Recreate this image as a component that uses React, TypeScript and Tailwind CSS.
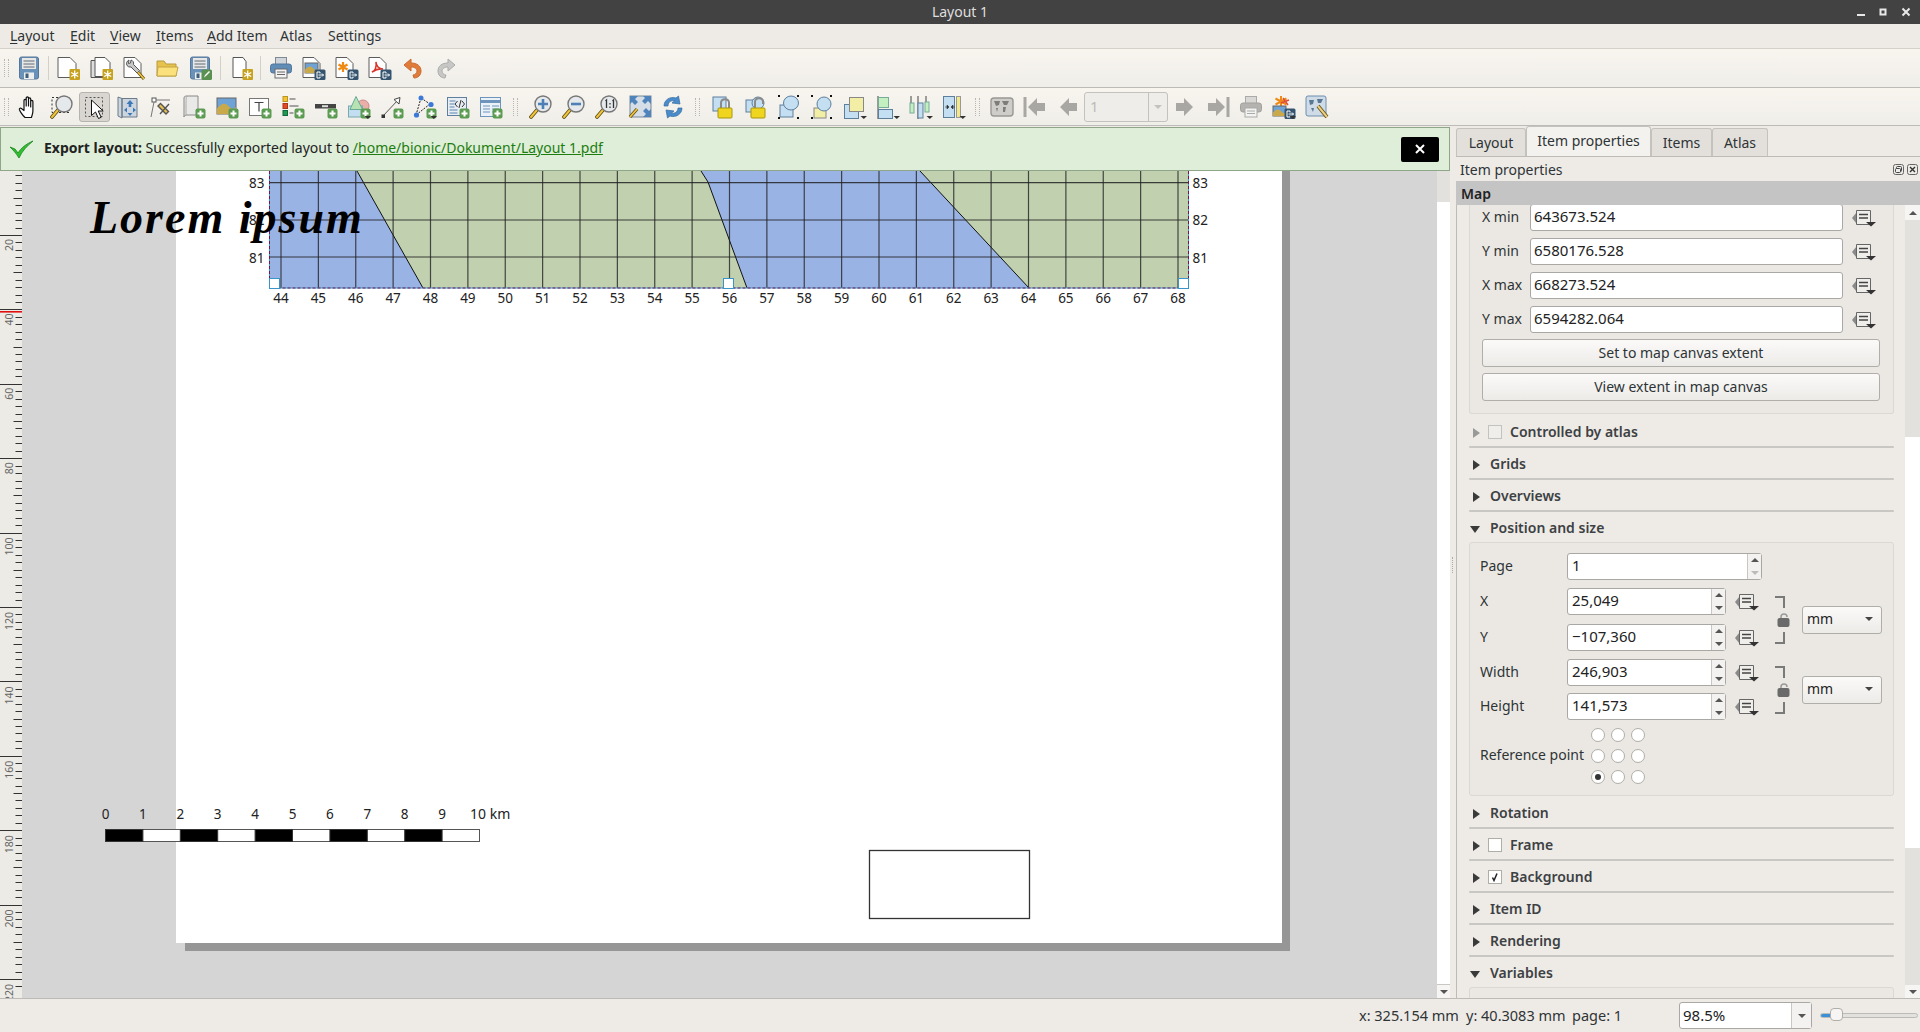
import * as React from "react"

type P = { children: React.ReactNode; w?: number; h?: number }

const Svg = ({ children, w = 24, h = 24 }: P) => (
  <svg width={w} height={h} viewBox={`0 0 ${w} ${h}`} className="block shrink-0">
    {children}
  </svg>
)

// small shared bits of the QGIS icons
const Sheet = ({ x = 2, w = 16 }: { x?: number; w?: number }) => (
  <path d={`M${x} 1.5h${w - 6}l6 6v14h-${w}z`} fill="#fff" stroke="#5c5c5c" />
)
const Star = () => (
  <g>
    <rect x="13.5" y="13" width="10.5" height="11" rx="1" fill="#c7a21f" />
    <path d="M18.7 14.5v8M15.2 16.5l7 4M22.2 16.5l-7 4" stroke="#fff" strokeWidth="1.3" />
  </g>
)
const Out = () => (
  <g>
    <rect x="12.5" y="13.5" width="11" height="10.5" rx="1.5" fill="#34546f" />
    <path d="M15 16v6M15 16h3v1.5M15 22h3v-1.5M16.5 19h5M20 17.5l1.5 1.5-1.5 1.5" stroke="#fff" strokeWidth="1" fill="none" />
  </g>
)
const Plus = () => (
  <g>
    <rect x="13.5" y="13.5" width="10" height="10" rx="2" fill="#5c9c52" />
    <path d="M18.5 15.5v6M15.5 18.5h6" stroke="#fff" strokeWidth="2" />
  </g>
)
const Drop = () => <path d="M17.5 21h6.5l-3.2 3z" fill="#333" />
const Floppy = () => (
  <g>
    <rect x="2.5" y="1" width="19" height="22" rx="2" fill="#6a92b8" stroke="#55779a" />
    <rect x="5" y="2" width="14" height="11" fill="#e7e7e5" />
    <path d="M6.5 5h11M6.5 8h11M6.5 11h11" stroke="#5f6b76" />
    <rect x="7" y="16.5" width="10" height="6.5" fill="#eee" />
    <rect x="8.5" y="17.5" width="3" height="4.5" fill="#3f5d7c" />
  </g>
)
const Lens = ({ children }: { children?: React.ReactNode }) => (
  <g>
    <path d="M8 15l-6 7" stroke="#5b4a12" strokeWidth="3.6" strokeLinecap="round" />
    <path d="M8 15l-6 7" stroke="#f0c53b" strokeWidth="2" strokeLinecap="round" />
    <circle cx="14" cy="9" r="8" fill="#e6e9ec" stroke="#777" strokeWidth="1.4" />
    {children}
  </g>
)
const Pic = ({ x = 2, y = 7, w = 18, h = 13 }: { x?: number; y?: number; w?: number; h?: number }) => (
  <g>
    <rect x={x} y={y} width={w} height={h} fill="#6fa3d6" stroke="#666" />
    <path d={`M${x} ${y + h * 0.65}q${w * 0.35} -${h * 0.5} ${w * 0.6} -${h * 0.15}t${w * 0.4} ${h * 0.05}V${y + h}H${x}z`} fill="#c9a94a" />
  </g>
)

const icons: Record<string, React.ReactNode> = {
  save: <Floppy />,
  newLayout: (<><Sheet x={2} w={18} /><Star /></>),
  dupLayout: (<><path d="M2 4.5h13v17H2z" fill="#ddd" stroke="#555" /><path d="M6 1.5h10l5 5v14H6z" fill="#fff" stroke="#555" /><Star /></>),
  manager: (
    <>
      <Sheet x={2} w={17} />
      <path d="M7 4a4 4 0 0 0-2 5.500 4 4 0 0 0 4 1.500l6 6 2.500-2.500-6-6c.5-2-.5-4-2.500-4.500l-.5 3-2 .5z" fill="#c9c9c9" stroke="#555" />
      <path d="M16 16l6 7" stroke="#5b4a12" strokeWidth="3" />
      <path d="M16 16l6 7" stroke="#edc43f" strokeWidth="1.7" />
    </>
  ),
  open: (<><path d="M2 20V5h7l2 3h10v12z" fill="#e7c24e" stroke="#b79a3f" /><path d="M2 20l1-9h20l-2 9z" fill="#fbe17b" stroke="#c3a544" /></>),
  saveAs: (<><Floppy /><rect x="13.5" y="13.5" width="10.5" height="10.5" rx="1.5" fill="#5b9150" /><path d="M16 21.5l1-2.5 4-4 1 1-4 4z" fill="#fff" /></>),
  addPage: (<><path d="M4 1.5h10l3 4v16H4z" fill="#fff" stroke="#555" /><Star /></>),
  print: (
    <>
      <rect x="6.5" y="1.5" width="11" height="7" fill="#cfd5da" stroke="#7f8a94" />
      <rect x="1.5" y="8" width="21" height="9" rx="2.5" fill="#5f8db8" stroke="#52779b" />
      <rect x="6" y="13" width="12" height="9" fill="#f3f3f3" stroke="#6b6b6b" />
      <path d="M8 16h8M8 18.5h8" stroke="#666" />
    </>
  ),
  expImg: (<><Sheet x={1} w={17} /><Pic x={3} y={7} w={13} h={10} /><Out /></>),
  expSvg: (<><Sheet x={1} w={17} /><path d="M8 6v10M3.5 8.5l9 5M12.5 8.5l-9 5" stroke="#f08a12" strokeWidth="2.2" /><Out /></>),
  expPdf: (<><Sheet x={1} w={17} /><path d="M4 16c3-1 5-5 4-10 0 4 3 7 7 7-4-.5-8 1-11 3z" fill="none" stroke="#d8352a" strokeWidth="1.6" /><Out /></>),
  undo: (<path d="M3 9l7-6v4c6 0 10 3 10 8 0 4-3 7-7 7l-1-3c2 0 4-2 4-4s-2-4-6-4v4z" fill="#e07b3a" stroke="#c96a2d" />),
  redo: (<path d="M21 9l-7-6v4C8 7 4 10 4 15c0 4 3 7 7 7l1-3c-2 0-4-2-4-4s2-4 6-4v4z" fill="#c7c7c5" stroke="#ababa9" />),

  hand: (<path d="M8 22.5c-2-2-5-6-5.6-8-.3-1.2 1.3-1.9 2-1L7 15.5V5.5c0-1.4 2.2-1.4 2.2 0V11 3c0-1.4 2.300-1.4 2.300 0v8-7c0-1.4 2.200-1.4 2.200 0v8-5.500c0-1.400 2.200-1.400 2.200 0V16c0 3-1 4.500-1.500 6.500z" fill="#fff" stroke="#111" strokeWidth="1.2" strokeLinejoin="round" />),
  zoomSel: (
    <>
      <rect x="2" y="2.5" width="17" height="15" fill="none" stroke="#333" strokeDasharray="2 2" />
      <Lens />
    </>
  ),
  select: (
    <>
      <rect x="2.5" y="2.5" width="17" height="19" fill="none" stroke="#555" strokeDasharray="2 2" />
      <path d="M8.5 5v15.500l4-3.500 3 6.500 2.700-1.200-3-6.300h5z" fill="#fff" stroke="#111" />
    </>
  ),
  moveContent: (
    <>
      <path d="M2 2l4 1.500V23L2 21zM6 3.500h15V22H6z" fill="#cdd6de" stroke="#6b7b8a" />
      <path d="M14 5l3.500 4h-2.200v3h-2.600V9h-2.200zM8 15l3-2.500v5zM20 15l-3-2.500v5zM14 21l-2.500-3h5z" fill="#3c79b8" />
    </>
  ),
  nodes: (
    <>
      <rect x="3" y="3" width="4" height="4" fill="#fff" stroke="#555" />
      <path d="M7 5h14M5 7L2 22" stroke="#777" />
      <path d="M9 11l8 8 2.500-2.500-8-8zM20 9l-9 10" stroke="#555" fill="#e7c24e" strokeWidth="1.4" />
    </>
  ),
  addMap: (
    <>
      <path d="M2 3c0-2 2-2 3-2h11v19H5c-2 0-3 1-3 2z" fill="#e9e9e7" stroke="#888" />
      <path d="M5 1c-1 1-1 2-1 19" stroke="#aaa" fill="none" />
      <Plus />
    </>
  ),
  addPic: (<><Pic x={2} y={3} w={19} h={16} /><Plus /></>),
  addLabel: (
    <>
      <rect x="1.5" y="3.500" width="19" height="17" fill="#fff" stroke="#777" />
      <path d="M6.500 7.500h9M11 7.500v9" stroke="#444" strokeWidth="1.2" />
      <Plus />
    </>
  ),
  addLegend: (
    <>
      <rect x="2" y="1.500" width="4.500" height="5" fill="#f5c431" stroke="#b89421" />
      <rect x="2" y="8.500" width="4.500" height="5" fill="#e24a22" stroke="#a8351a" />
      <rect x="2" y="15.500" width="4.500" height="5" fill="#1d9c4f" stroke="#12683a" />
      <path d="M8.500 4h6M8.500 11h9M8.500 18h4" stroke="#888" strokeWidth="1.6" />
      <Plus />
    </>
  ),
  addScale: (
    <>
      <rect x="1" y="9" width="21" height="4.500" fill="#444" />
      <path d="M8 11.200h6" stroke="#ddd" strokeWidth="2" />
      <Plus />
    </>
  ),
  addShape: (
    <>
      <circle cx="16" cy="11" r="6" fill="#eab0a8" stroke="#c88" />
      <rect x="1.500" y="11" width="14" height="11" fill="#c3def0" stroke="#7aa" />
      <path d="M9 1.500l6.500 13H3z" fill="#b7e3b3" stroke="#6a9" />
      <Plus />
      <Drop />
    </>
  ),
  addArrow: (
    <>
      <path d="M3 21L18 5" stroke="#555" />
      <path d="M20 2.500l-1 6.500-5-4.500z" fill="#fff" stroke="#444" />
      <rect x="1.500" y="19.500" width="3.500" height="3.500" fill="#333" />
      <Plus />
    </>
  ),
  addNode: (
    <>
      <path d="M8 3l9 6M8 3L3 20M3 20l14-11" stroke="#222" strokeDasharray="2 1.200" fill="none" />
      <circle cx="8" cy="3" r="2.500" fill="#3b78d8" />
      <circle cx="18" cy="9.500" r="2.600" fill="#3b78d8" />
      <circle cx="3.500" cy="20" r="2.600" fill="#3b78d8" />
      <Plus />
      <Drop />
    </>
  ),
  addHtml: (
    <>
      <rect x="1.500" y="2.500" width="19" height="18" fill="#e8eef4" stroke="#5f7f9f" />
      <path d="M3.500 6h6M3.500 9h5M3.500 12h5M3.500 15h8M3.500 18h8" stroke="#5b85ae" />
      <path d="M11.500 6l-2.500 3 2.500 3M16 6l2.500 3L16 12M15 5l-2 8" stroke="#333" fill="none" />
      <Plus />
    </>
  ),
  addTable: (
    <>
      <rect x="1.500" y="2.500" width="20" height="19" fill="#eaf1f8" stroke="#6d94bb" />
      <path d="M1.500 6.500h20" stroke="#6d94bb" strokeWidth="3" />
      <path d="M4 11h7M13 11h7M4 14h7M13 14h7M4 17h7M13 17h7" stroke="#6d94bb" />
      <Plus />
    </>
  ),
  zoomIn: (<Lens><path d="M14 4v10M9 9h10" stroke="#4d80b5" strokeWidth="2.600" /></Lens>),
  zoomOut: (<Lens><path d="M9 9h10" stroke="#4d80b5" strokeWidth="2.600" /></Lens>),
  zoom1: (<Lens><path d="M10.500 6l1-1v8M15 8v1.500M15 11.500V13M17.500 6l1-1v8" stroke="#333" strokeWidth="1.300" fill="none" /></Lens>),
  zoomFull: (
    <>
      <rect x="2" y="1" width="21" height="21" fill="#d5dee6" stroke="#789" />
      <path d="M2 1h8l-3 3 3 3-3 3-3-3-2 2zM23 1v8l-3-3-3 3-3-3 3-3-2-2zM23 22h-8l3-3-3-3 3-3 3 3 2-2z" fill="#4f83bb" />
      <path d="M9 14l-7 8" stroke="#5b4a12" strokeWidth="3.400" />
      <path d="M9 14l-7 8" stroke="#f0c53b" strokeWidth="1.800" />
    </>
  ),
  refresh: (
    <>
      <path d="M3 11C3 5 9 1 15 3l2.500-2 1.500 8-8-1 2.500-2C9 5 7 8 7 11z" fill="#4a8ccb" stroke="#356a9f" strokeWidth=".7" />
      <path d="M21 13c0 6-6 10-12 8l-2.500 2L5 15l8 1-2.500 2c4 1 6.500-2 6.500-5z" fill="#4a8ccb" stroke="#356a9f" strokeWidth=".7" />
    </>
  ),
  lock: (
    <>
      <rect x="2" y="2" width="13" height="14" fill="#c4dff2" stroke="#5c7f9c" />
      <path d="M10 14V8c0-5 8-5 8 0v6" fill="none" stroke="#8a8a8a" strokeWidth="2" />
      <rect x="7" y="13" width="14" height="10" rx="1" fill="#efd51e" stroke="#a9950f" />
    </>
  ),
  unlock: (
    <>
      <rect x="2" y="5" width="11" height="12" fill="#c4dff2" stroke="#5c7f9c" />
      <circle cx="14" cy="8" r="6" fill="#c4dff2" stroke="#5c7f9c" />
      <path d="M11 13V7c0-5 8-5 8 0v2" fill="none" stroke="#8a8a8a" strokeWidth="2" />
      <rect x="7" y="13" width="14" height="10" rx="1" fill="#efd51e" stroke="#a9950f" />
    </>
  ),
  group: (
    <>
      <rect x="3" y="10" width="13" height="12" fill="#c4dff2" stroke="#5c7f9c" />
      <ellipse cx="14" cy="8" rx="7.500" ry="7" fill="#c4dff2" stroke="#5c7f9c" />
      <path d="M1 0h2v2H1zM20 0h2v2h-2zM1 22h2v2H1zM20 22h2v2h-2z" fill="#111" />
    </>
  ),
  ungroup: (
    <>
      <rect x="4" y="13" width="12" height="10" fill="#f3eea6" stroke="#888" />
      <ellipse cx="14" cy="9" rx="7" ry="7" fill="#c4dff2" stroke="#5c7f9c" />
      <path d="M1 0h2v2H1zM20 0h2v2h-2zM1 22h2v2H1zM20 22h2v2h-2z" fill="#111" />
    </>
  ),
  raise: (
    <>
      <rect x="1.500" y="9.500" width="14" height="14" fill="#c4dff2" stroke="#5c7f9c" />
      <rect x="6.500" y="2.500" width="14" height="14" fill="#f3eea6" stroke="#888" />
      <Drop />
    </>
  ),
  align: (
    <>
      <path d="M2 1v23" stroke="#444" />
      <rect x="2.500" y="2.500" width="10" height="10" fill="#c3efc1" stroke="#7a9" />
      <rect x="2.500" y="14.500" width="14" height="9" fill="#c4dff2" stroke="#5c7f9c" />
      <Drop />
    </>
  ),
  distribute: (
    <>
      <path d="M2 1v11M9 1v23M17 1v12" stroke="#444" />
      <rect x="1" y="8" width="4" height="10" fill="#c3efc1" stroke="#7a9" />
      <rect x="9" y="8" width="5" height="15" fill="#c4dff2" stroke="#5c7f9c" />
      <rect x="16" y="7" width="4" height="10" fill="#c3efc1" stroke="#7a9" />
      <Drop />
    </>
  ),
  resize: (
    <>
      <rect x="1.500" y="1.500" width="11" height="21" fill="#c4dff2" stroke="#5c7f9c" />
      <rect x="14.500" y="1.500" width="4" height="21" fill="#f3e98a" stroke="#999" />
      <path d="M3 12h3M7 12l-2-2v4zM13 12h-3M9 12l2-2v4z" fill="#333" stroke="#333" strokeWidth=".6" />
      <Drop />
    </>
  ),
  atlas: (
    <>
      <rect x="1" y="3" width="22" height="18" rx="3" fill="#cfcdc9" stroke="#9a9894" strokeWidth="1.400" />
      <path d="M4 6h6l-1 4-3 1zM12 6h7l-2 4h-3zM13 12h3l-1 5h-2zM6 13h2l-1 4z" fill="#7f7d79" />
    </>
  ),
  first: (<><path d="M2 2v20" stroke="#a9a7a3" strokeWidth="3" /><path d="M5 12l9-9v5h8v8h-8v5z" fill="#a9a7a3" /></>),
  prev: (<path d="M4 12l9-9v5h8v8h-8v5z" fill="#a9a7a3" />),
  next: (<path d="M20 12l-9-9v5H3v8h8v5z" fill="#a9a7a3" />),
  last: (<><path d="M22 2v20" stroke="#a9a7a3" strokeWidth="3" /><path d="M19 12l-9-9v5H2v8h8v5z" fill="#a9a7a3" /></>),
  printOff: (
    <>
      <rect x="6.500" y="1.500" width="11" height="7" fill="#dad8d4" stroke="#aaa" />
      <rect x="1.500" y="8" width="21" height="9" rx="2.500" fill="#b5b3af" stroke="#a3a19d" />
      <rect x="6" y="13" width="12" height="9" fill="#f3f3f1" stroke="#aaa" />
      <path d="M8 16h8M8 18.500h8" stroke="#aaa" />
    </>
  ),
  expAtlas: (
    <>
      <path d="M9 1v11M3.500 3.500l11 6M14.500 3.500l-11 6" stroke="#f08a12" strokeWidth="2" />
      <path d="M9 8l8-3M11 3l5 7" stroke="#e04c3a" strokeWidth="1.400" />
      <Pic x={1} y={11} w={13} h={10} />
      <Out />
      <Drop />
    </>
  ),
  atlasSet: (
    <>
      <rect x="1" y="1" width="20" height="20" rx="2" fill="#cfdce8" stroke="#6d8eac" />
      <path d="M4 5h5l-1 4-3 1zM12 4h6l-2 4h-3zM6 13h3l-1 4z" fill="#5a7894" />
      <path d="M13 11l9 11" stroke="#5b4a12" strokeWidth="3.600" />
      <path d="M13 11l9 11" stroke="#eed083" strokeWidth="2" />
    </>
  ),
}

const Btn = ({ name, active }: { name: string; active?: boolean }) => (
  <div className="flex h-[38px] w-[33px] shrink-0 items-center justify-center">
    <div className={active ? "flex h-[30px] w-[31px] items-center justify-center rounded-[3px] border border-[#b5b3ae] bg-[#d9d6d1]" : "flex h-[30px] w-[31px] items-center justify-center"}>
      <Svg>{icons[name]}</Svg>
    </div>
  </div>
)

const Grip = ({ className }: { className: string }) => (
  <div className={`flex shrink-0 justify-center ${className}`}>
    <div className="h-[18px] w-[5px] border-x border-dotted border-[#b8b6b1]" />
  </div>
)

const Sep = ({ className }: { className: string }) => (
  <div className={`flex shrink-0 justify-center ${className}`}>
    <div className="h-[24px] w-px bg-[#d3d0ca]" />
  </div>
)

const menus = [
  { k: "L", rest: "ayout", c: "w-[60px]" },
  { k: "E", rest: "dit", c: "w-[40px]" },
  { k: "V", rest: "iew", c: "w-[46px]" },
  { k: "I", rest: "tems", c: "w-[51px]" },
  { k: "A", rest: "dd Item", c: "w-[73px]" },
  { k: "", rest: "Atlas", c: "w-[48px]" },
  { k: "", rest: "Settings", c: "w-[60px]" },
]

const Toolbars = () => (
  <>
    <div className="flex h-[39px] items-center border-b border-[#bdbbb7] bg-gradient-to-b from-[#f8f5ef] to-[#f0eee9]">
      <Grip className="w-[12px]" />
      <Btn name="save" />
      <Sep className="w-[6px]" />
      <Btn name="newLayout" />
      <Btn name="dupLayout" />
      <Btn name="manager" />
      <Btn name="open" />
      <Btn name="saveAs" />
      <Sep className="w-[8px]" />
      <Btn name="addPage" />
      <Sep className="w-[7px]" />
      <Btn name="print" />
      <Btn name="expImg" />
      <Btn name="expSvg" />
      <Btn name="expPdf" />
      <Btn name="undo" />
      <Btn name="redo" />
    </div>
    <div className="flex h-[38px] items-center border-b border-[#bdbbb7] bg-gradient-to-b from-[#f8f5ef] to-[#f0eee9]">
      <Grip className="w-[12px]" />
      <Btn name="hand" />
      <Btn name="zoomSel" />
      <Btn name="select" active />
      <Btn name="moveContent" />
      <Btn name="nodes" />
      <Btn name="addMap" />
      <Btn name="addPic" />
      <Btn name="addLabel" />
      <Btn name="addLegend" />
      <Btn name="addScale" />
      <Btn name="addShape" />
      <Btn name="addArrow" />
      <Btn name="addNode" />
      <Btn name="addHtml" />
      <Btn name="addTable" />
      <Grip className="w-[17px]" />
      <Btn name="zoomIn" />
      <Btn name="zoomOut" />
      <Btn name="zoom1" />
      <Btn name="zoomFull" />
      <Btn name="refresh" />
      <Grip className="w-[17px]" />
      <Btn name="lock" />
      <Btn name="unlock" />
      <Btn name="group" />
      <Btn name="ungroup" />
      <Btn name="raise" />
      <Btn name="align" />
      <Btn name="distribute" />
      <Btn name="resize" />
      <Grip className="w-[15px]" />
      <Btn name="atlas" />
      <Btn name="first" />
      <Btn name="prev" />
      <div className="flex h-[30px] w-[84px] shrink-0 items-center rounded-[3px] border border-[#c4c2bd] bg-[#efedea] text-[15px] text-[#bdbbb7]">
        <span className="flex-1 pl-[5px]">1</span>
        <div className="flex h-full w-[19px] items-center justify-center border-l border-[#c4c2bd]">
          <div className="h-0 w-0 border-x-[4px] border-t-[4px] border-x-transparent border-t-[#c4c2bd]" />
        </div>
      </div>
      <Btn name="next" />
      <Btn name="last" />
      <Btn name="printOff" />
      <Btn name="expAtlas" />
      <Btn name="atlasSet" />
    </div>
  </>
)

const Ruler = () => {
  const ticks = Array.from({ length: 112 }, (_, i) => i)
  const labels = [20, 40, 60, 80, 100, 120, 140, 160, 180, 200, 220]
  const yOf = (mm: number) => 64 + (mm - 20) * 3.72
  return (
    <svg width="22" height="827" viewBox="0 0 22 827" className="block shrink-0 bg-[#edebe6]">
      {ticks.map((i) => {
        const mm = i * 2
        const y = Math.round(yOf(mm)) + 0.5
        const major = mm % 20 === 0
        const mid = mm % 10 === 0
        return <line key={i} x1={major ? 0 : mid ? 13.5 : 15.5} x2="22" y1={y} y2={y} stroke="#333" />
      })}
      {labels.map((v) => (
        <text key={v} transform={`translate(13 ${yOf(v) + (v > 99 ? 14 : 10)}) rotate(-90)`} fontSize="10.5" fill="#666" textAnchor="middle">
          {v}
        </text>
      ))}
      <rect x="0" y="140" width="22" height="1.600" fill="#e01010" />
    </svg>
  )
}

// the layout page contents, drawn in screen pixels
const PageArt = () => {
  const xs = Array.from({ length: 25 }, (_, i) => 281 + 37.375 * i)
  return (
    <svg width="1416" height="827" viewBox="22 171 1416 827" className="absolute left-0 top-0 block">
      <rect x="269" y="171" width="920" height="117" fill="#c1d1b0" />
      <path d="M269 171H357L423 288H269z" fill="#9ab3e5" />
      <path d="M701 171L708 182 747 288H1029L920 171z" fill="#9ab3e5" />
      <path d="M357 171L423 288M701 171L708 182 747 288M920 171L1029 288" stroke="#111" fill="none" />
      {xs.map((x) => (
        <line key={x} x1={x} x2={x} y1="171" y2="288" stroke="#222" strokeOpacity=".8" strokeWidth="1.2" />
      ))}
      {[182.7, 220, 257].map((y) => (
        <line key={y} x1="269" x2="1188" y1={y} y2={y} stroke="#222" strokeOpacity=".85" strokeWidth="1.2" />
      ))}
      <path d="M269.5 171V288H1188.500V171" fill="none" stroke="#3aa0c9" />
      <path d="M269.5 171V288H1188.500V171" fill="none" stroke="#7a1155" strokeDasharray="3 2" />
      {[269, 723, 1178].map((x) => (
        <rect key={x} x={x + 0.5} y="278.5" width="10" height="10" fill="#fff" stroke="#3a93c9" />
      ))}
      <g fontSize="13.5" fill="#222" textAnchor="middle">
        {xs.map((x, i) => (
          <text key={i} x={x} y="303">{44 + i}</text>
        ))}
      </g>
      <g fontSize="13.5" fill="#222">
        {[83, 82, 81].map((v, i) => (
          <g key={v}>
            <text x="249" y={188 + i * 37.3}>{v}</text>
            <text x="1192.500" y={188 + i * 37.3}>{v}</text>
          </g>
        ))}
      </g>
      <g>
        <rect x="105.5" y="829.5" width="374" height="12" fill="#fff" stroke="#555" />
        {[0, 2, 4, 6, 8].map((i) => (
          <rect key={i} x={105.5 + i * 37.4} y="829.5" width="37.4" height="12" fill="#000" stroke="#333" />
        ))}
        <g fontSize="13.5" fill="#222" textAnchor="middle">
          {[0, 1, 2, 3, 4, 5, 6, 7, 8, 9].map((i) => (
            <text key={i} x={105.5 + i * 37.4} y="819">{i}</text>
          ))}
        </g>
        <text x="470" y="819" fontSize="14" fill="#222">10 km</text>
      </g>
      <rect x="869.5" y="850.5" width="160" height="68" fill="#fff" stroke="#333" strokeWidth="1.3" />
    </svg>
  )
}

const Canvas = () => (
  <div className="relative min-w-0 flex-1 overflow-hidden bg-[#d5d5d5]">
    <div className="absolute left-[163px] top-[-100px] h-[880px] w-[1105px] bg-[#969696]" />
    <div className="absolute left-[154px] top-[-100px] h-[872px] w-[1106px] bg-white" />
    <PageArt />
    <div className="absolute left-[68px] top-[17px] whitespace-nowrap font-['Liberation_Serif',serif] text-[46px] font-bold italic leading-[60px] tracking-[2px] text-black">
      Lorem ipsum
    </div>
  </div>
)

const VScroll = () => (
  <div className="flex w-[13px] shrink-0 flex-col">
    <div className="h-[31px] bg-[#e3e1dd]" />
    <div className="flex-1 bg-white" />
    <div className="flex h-[14px] items-center justify-center border-t border-[#c9c7c3] bg-[#f6f5f3]">
      <div className="h-0 w-0 border-x-[4px] border-t-[4px] border-x-transparent border-t-[#555]" />
    </div>
  </div>
)

const DataIcon = () => (
  <Svg w={24} h={18}>
    <path d="M0 9l4.500-5.500v11z" fill="#8a8a8a" />
    <path d="M4.500 1.500h14v14h-14z" fill="#f0eeea" stroke="#666" />
    <path d="M7 5.500h9M7 9h9" stroke="#444" strokeWidth="1.400" />
    <path d="M14 13h10l-5 4.500z" fill="#333" />
  </Svg>
)

const Field = ({ label, value }: { label: string; value: string }) => (
  <div className="flex h-[27px] items-center">
    <span className="w-[48px] shrink-0 pb-[2px] text-[#2e3436]">{label}</span>
    <div className="flex h-full w-[313px] items-center rounded-[3px] border border-[#aaa8a4] bg-white pb-[2px] pl-[3px] text-[15px] text-[#222]">{value}</div>
    <div className="ml-[9px]"><DataIcon /></div>
  </div>
)

const PushBtn = ({ label }: { label: string }) => (
  <div className="flex h-[28px] w-[398px] items-center justify-center rounded-[3px] border border-[#b0aea9] bg-gradient-to-b from-[#fbfaf9] to-[#ecebe8] pb-[2px] text-[#2e3436]">{label}</div>
)

const Tri = ({ open, off }: { open?: boolean; off?: boolean }) => (
  <div
    className={
      open
        ? "mt-[2px] h-0 w-0 border-x-[5.5px] border-t-[7px] border-x-transparent border-t-[#3a3a3a]"
        : off
          ? "ml-[3px] mt-[2px] h-0 w-0 border-y-[5.5px] border-l-[7px] border-y-transparent border-l-[#999]"
          : "ml-[3px] mt-[2px] h-0 w-0 border-y-[5.5px] border-l-[7px] border-y-transparent border-l-[#3a3a3a]"
    }
  />
)

const Section = ({ title, check, checked, off, open }: { title: string; check?: boolean; checked?: boolean; off?: boolean; open?: boolean }) => (
  <div className="flex h-[28px] items-center">
    <div className={check ? "w-[19px] shrink-0 pl-px" : "w-[21px] shrink-0 pl-px"}><Tri open={open} off={off} /></div>
    {check && (
      <div className={off ? "mr-[8px] flex h-[14px] w-[14px] items-center justify-center border border-[#c4c2be] bg-[#f0eeea]" : "mr-[8px] flex h-[14px] w-[14px] items-center justify-center border border-[#b0aea9] bg-white"}>
        {checked && (
          <svg width="10" height="10" viewBox="0 0 10 10" className="block">
            <path d="M2.500 5.500L4 8.500 7 1.500" fill="none" stroke="#222" strokeWidth="1.500" />
          </svg>
        )}
      </div>
    )}
    <span className="pb-[2px] font-semibold text-[#3d4143]">{title}</span>
  </div>
)

const Rule = () => <div className="mb-[2px] h-[2px] rounded-[1px] bg-[#c9c7c3]" />

const Arrow = ({ up, dim }: { up?: boolean; dim?: boolean }) => (
  <div className="flex h-1/2 w-full items-center justify-center">
    <div className={
      up
        ? "h-0 w-0 border-x-[4px] border-b-[4px] border-x-transparent border-b-[#555]"
        : dim
          ? "h-0 w-0 border-x-[4px] border-t-[4px] border-x-transparent border-t-[#bbb]"
          : "h-0 w-0 border-x-[4px] border-t-[4px] border-x-transparent border-t-[#555]"
    } />
  </div>
)

const Spin = ({ value, wide, dim }: { value: string; wide?: boolean; dim?: boolean }) => (
  <div className={wide ? "flex h-[27px] w-[195px] items-center rounded-[3px] border border-[#aaa8a4] bg-white" : "flex h-[27px] w-[159px] items-center rounded-[3px] border border-[#aaa8a4] bg-white"}>
    <span className="flex-1 pb-[2px] pl-[4px] text-[15px] text-[#222]">{value}</span>
    <div className="flex h-full w-[14px] flex-col border-l border-[#c9c7c3] bg-[#f3f2f0]">
      <Arrow up />
      <Arrow dim={dim} />
    </div>
  </div>
)

const SizeRow = ({ label, value, className }: { label: string; value: string; className?: string }) => (
  <div className={`flex items-center ${className ?? ""}`}>
    <span className="w-[87px] pb-[2px] text-[#2e3436]">{label}</span>
    <Spin value={value} />
    <div className="ml-[9px]"><DataIcon /></div>
  </div>
)

const LockBracket = () => (
  <Svg w={16} h={48}>
    <path d="M0 1h9v11M9 36v11H0" fill="none" stroke="#7a7a7a" strokeWidth="2" />
    <path d="M6 23v-2c0-4 6-4 6 0" fill="none" stroke="#9a9a9a" strokeWidth="1.500" />
    <rect x="2.500" y="22" width="12" height="9" rx="2" fill="#6a6a6a" />
  </Svg>
)

const UnitCombo = () => (
  <div className="flex h-[28px] w-[80px] items-center justify-between rounded-[3px] border border-[#b0aea9] bg-gradient-to-b from-[#fbfaf9] to-[#ecebe8] pb-[2px] pl-[4px] pr-[8px] text-[#222]">
    mm
    <div className="h-0 w-0 border-x-[4px] border-t-[4px] border-x-transparent border-t-[#444]" />
  </div>
)

const Radio = ({ on }: { on?: boolean }) => (
  <div className="flex h-[14px] w-[14px] items-center justify-center rounded-full border border-[#b0aea9] bg-white">
    {on && <div className="h-[6px] w-[6px] rounded-full bg-[#333]" />}
  </div>
)

const PositionBox = () => (
  <div className="h-[254px] rounded-[3px] border border-[#dad8d3] bg-[#ebe8e3] pl-[10px] pt-[10px]">
    <div className="flex items-center">
      <span className="w-[87px] pb-[2px] text-[#2e3436]">Page</span>
      <Spin value="1" wide dim />
    </div>
    <div className="mt-[8px] flex items-center">
      <div>
        <SizeRow label="X" value="25,049" />
        <SizeRow label="Y" value="−107,360" className="mt-[9px]" />
      </div>
      <div className="ml-[16px]"><LockBracket /></div>
      <div className="ml-[11px]"><UnitCombo /></div>
    </div>
    <div className="mt-[8px] flex items-center">
      <div>
        <SizeRow label="Width" value="246,903" />
        <SizeRow label="Height" value="141,573" className="mt-[7px]" />
      </div>
      <div className="ml-[16px]"><LockBracket /></div>
      <div className="ml-[11px]"><UnitCombo /></div>
    </div>
    <div className="mt-[4px] flex items-center">
      <span className="w-[111px] pb-[2px] text-[#2e3436]">Reference point</span>
      <div className="grid grid-cols-[repeat(3,20px)] grid-rows-[repeat(3,21px)] items-center">
        {[0, 1, 2, 3, 4, 5, 6, 7, 8].map((i) => (
          <Radio key={i} on={i === 6} />
        ))}
      </div>
    </div>
  </div>
)

const DockScroll = () => (
  <div className="flex w-[15px] shrink-0 flex-col">
    <div className="flex h-[15px] items-center justify-center bg-[#f6f5f3]">
      <div className="h-0 w-0 border-x-[4px] border-b-[4px] border-x-transparent border-b-[#555]" />
    </div>
    <div className="h-[217px] bg-[#e3e1dd]" />
    <div className="h-[411px] bg-white" />
    <div className="flex-1 bg-[#e3e1dd]" />
    <div className="flex h-[13px] items-center justify-center bg-[#f6f5f3]">
      <div className="h-0 w-0 border-x-[4px] border-t-[4px] border-x-transparent border-t-[#555]" />
    </div>
  </div>
)

const Dock = () => (
  <div className="relative flex w-[470px] shrink-0 flex-col pl-[6px]">
    <div className="flex h-[30px] items-end border-b border-[#bdbbb7]">
      <div className="flex h-[28px] w-[70px] items-center justify-center rounded-t-[3px] border border-b-0 border-[#c4c2bd] bg-[#e3e0db] text-[#2e3436]">Layout</div>
      <div className="flex h-[30px] w-[125px] items-center justify-center rounded-t-[3px] border border-b-0 border-[#c4c2bd] bg-[#f4f2ee] pb-[2px] text-[#2e3436]">Item properties</div>
      <div className="flex h-[28px] w-[61px] items-center justify-center rounded-t-[3px] border border-b-0 border-[#c4c2bd] bg-[#e3e0db] text-[#2e3436]">Items</div>
      <div className="flex h-[28px] w-[56px] items-center justify-center rounded-t-[3px] border border-b-0 border-[#c4c2bd] bg-[#e3e0db] text-[#2e3436]">Atlas</div>
    </div>
    <div className="flex h-[24px] items-center justify-between pl-[4px] pr-[2px] text-[#2e3436]">
      Item properties
      <div className="flex gap-[3px]">
        <svg width="11" height="11" viewBox="0 0 11 11" className="block">
          <rect x=".5" y=".5" width="10" height="10" rx="2" fill="none" stroke="#666" />
          <rect x="3.500" y="2.500" width="5" height="5" rx="1" fill="none" stroke="#444" />
          <rect x="2.500" y="4.500" width="5" height="4" rx="1" fill="#eee" stroke="#444" />
        </svg>
        <svg width="11" height="11" viewBox="0 0 11 11" className="block">
          <rect x=".5" y=".5" width="10" height="10" rx="2" fill="none" stroke="#666" />
          <path d="M3 3l5 5M8 3l-5 5" stroke="#333" strokeWidth="1.400" />
        </svg>
      </div>
    </div>
    <div className="flex h-[24px] items-center bg-[#c4c4c4] pl-[5px] font-semibold text-[#222]">Map</div>
    <div className="flex min-h-0 flex-1 overflow-hidden border-l border-[#bdbbb7]">
      <div className="min-w-0 flex-1 overflow-hidden pl-[12px] pr-[11px]">
        <div className="-mt-px flex flex-col gap-[7px] rounded-b-[3px] border-x border-b border-[#dad8d3] bg-[#ebe8e3] pb-[12px] pl-[12px]">
          <Field label="X min" value="643673.524" />
          <Field label="Y min" value="6580176.528" />
          <Field label="X max" value="668273.524" />
          <Field label="Y max" value="6594282.064" />
          <div className="-mt-px flex flex-col gap-[6px]">
            <PushBtn label="Set to map canvas extent" />
            <PushBtn label="View extent in map canvas" />
          </div>
        </div>
        <div className="h-[4px]" />
        <Section title="Controlled by atlas" check off />
        <Rule />
        <Section title="Grids" />
        <Rule />
        <Section title="Overviews" />
        <Rule />
        <Section title="Position and size" open />
        <PositionBox />
        <div className="h-[3px]" />
        <Section title="Rotation" />
        <Rule />
        <Section title="Frame" check />
        <Rule />
        <Section title="Background" check checked />
        <Rule />
        <Section title="Item ID" />
        <Rule />
        <Section title="Rendering" />
        <Rule />
        <Section title="Variables" open />
        <div className="h-[20px] rounded-t-[3px] border border-[#dad8d3] bg-[#ebe8e3]" />
      </div>
      <DockScroll />
    </div>
    <div className="absolute left-[2px] top-[430px] h-[16px] w-[2px] border-l border-dotted border-[#aaa]" />
  </div>
)

export default function App() {
  return (
    <div className="flex h-[1032px] w-[1920px] flex-col overflow-hidden bg-[#eeebe7] font-['Noto_Sans',sans-serif] text-[14px] text-[#222]">
      <div className="relative flex h-[24px] shrink-0 items-center justify-center bg-[#424242] pb-[2px] text-[#dfdfdf]">
        Layout 1
        <div className="absolute right-[9px] top-0 flex h-full items-center gap-[13px]">
          <svg width="9" height="9" viewBox="0 0 9 9" className="block"><rect x="0" y="6" width="8" height="2" fill="#e8e8e8" /></svg>
          <svg width="9" height="9" viewBox="0 0 9 9" className="block"><rect x="1.500" y="1.500" width="5" height="5" fill="none" stroke="#e8e8e8" strokeWidth="2" /></svg>
          <svg width="10" height="10" viewBox="0 0 10 10" className="block"><path d="M1.500 1.500l7 7M8.500 1.500l-7 7" stroke="#e8e8e8" strokeWidth="2" /></svg>
        </div>
      </div>
      <div className="flex h-[25px] shrink-0 items-center border-b border-[#d5d2cc] bg-[#eeebe6] pb-[2px] pl-[10px] text-[#2e3436]">
        {menus.map((m) => (
          <span key={m.rest} className={m.c}>
            {m.k && <span className="underline underline-offset-2">{m.k}</span>}
            {m.rest}
          </span>
        ))}
      </div>
      <Toolbars />
      <div className="flex min-h-0 flex-1 pt-px">
        <div className="flex w-[1450px] shrink-0 flex-col">
          <div className="flex h-[44px] shrink-0 items-center border border-[#8fa688] bg-[#deeed9] pl-[9px] pr-[10px]">
            <svg width="24" height="18" viewBox="0 0 24 18" className="block shrink-0">
              <path d="M0 7l5 2 3 4C11 8 16 4 23 1 17 6 12 11 9 18 6 13 3 10 0 7z" fill="#2fc22f" stroke="#1a7f1a" strokeWidth=".8" />
            </svg>
            <div className="ml-[10px] flex-1 whitespace-nowrap pb-[3px] text-[#222]">
              <span className="font-bold">Export layout: </span>
              Successfully exported layout to{" "}
              <span className="text-[#1d7d0f] underline">/home/bionic/Dokument/Layout 1.pdf</span>
            </div>
            <div className="flex h-[25px] w-[38px] items-center justify-center rounded-[2px] bg-black">
              <svg width="10" height="10" viewBox="0 0 10 10" className="block"><path d="M1 1l8 8M9 1l-8 8" stroke="#fff" strokeWidth="2" /></svg>
            </div>
          </div>
          <div className="flex min-h-0 flex-1">
            <Ruler />
            <Canvas />
            <VScroll />
          </div>
        </div>
        <Dock />
      </div>
      <div className="flex h-[34px] shrink-0 items-center justify-end border-t border-[#bdbbb7] bg-[#eeebe6] pr-[2px] text-[14.5px] text-[#2e3436]">
        <span className="w-[107px] whitespace-nowrap">x: 325.154 mm</span>
        <span className="w-[106px] whitespace-nowrap">y: 40.3083 mm</span>
        <span className="w-[107px] whitespace-nowrap">page: 1</span>
        <div className="flex h-[27px] w-[133px] items-center rounded-[3px] border border-[#aaa8a4] bg-white">
          <span className="flex-1 pl-[3px] text-[15px] text-[#222]">98.5%</span>
          <div className="flex h-full w-[20px] items-center justify-center border-l border-[#c9c7c3] bg-[#f3f2f0]">
            <div className="h-0 w-0 border-x-[4px] border-t-[4px] border-x-transparent border-t-[#555]" />
          </div>
        </div>
        <div className="relative ml-[8px] h-[5px] w-[98px] rounded-full border border-[#bdbbb7] bg-[#e3e1dd]">
          <div className="h-full w-[14px] rounded-l-full bg-[#3d8fd6]" />
          <div className="absolute left-[9px] top-[-6px] h-[13px] w-[13px] rounded-[4px] border border-[#b0aea9] bg-[#f6f5f3]" />
        </div>
      </div>
    </div>
  )
}
